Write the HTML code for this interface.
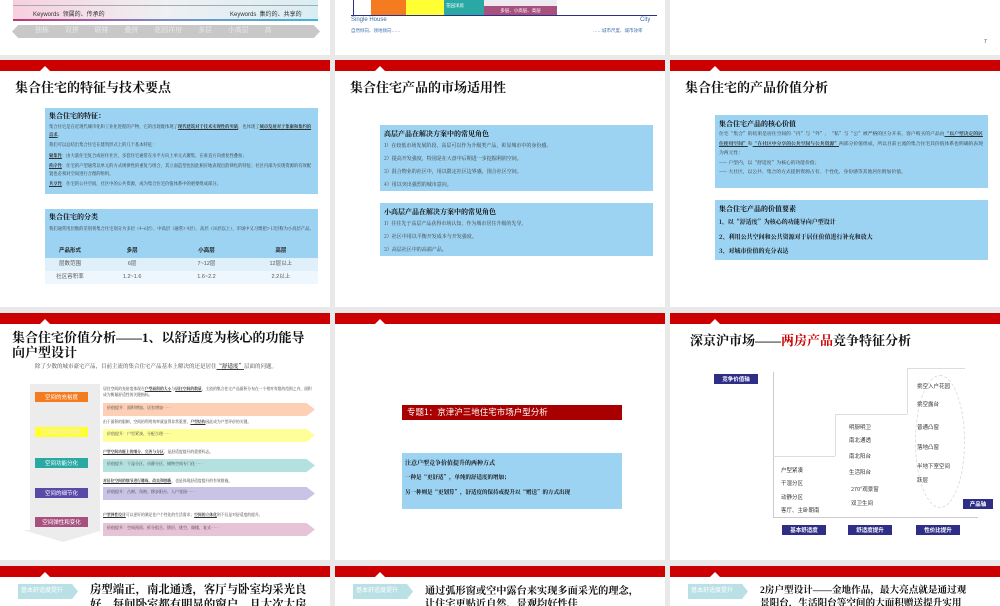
<!DOCTYPE html>
<html><head><meta charset="utf-8"><style>
*{margin:0;padding:0;box-sizing:border-box}
body{width:1000px;height:600px;background:#e9e9e9;position:relative;overflow:hidden;font-family:"Liberation Sans","Noto Sans CJK SC",sans-serif;color:#222}
.s{position:absolute;background:#fff;overflow:hidden}
.bar{position:absolute;left:0;top:0;width:100%;height:11px;background:#cc0000}
.tri{position:absolute;top:6px;left:40px;width:0;height:0;border-left:5px solid transparent;border-right:5px solid transparent;border-bottom:5px solid #fff}
.t{position:absolute;font-family:"Liberation Serif","Noto Serif CJK SC",serif;font-weight:bold;font-size:13px;color:#111;white-space:nowrap}
.a{position:absolute}
.box{position:absolute;background:#9dd3f2}
.bh{font-family:"Noto Serif CJK SC",serif;font-weight:bold;font-size:7px;color:#111;white-space:nowrap}
.sm{font-family:"Noto Serif CJK SC",serif;font-size:4.3px;color:#333;line-height:6.5px}
.lb{position:absolute;color:#fff;font-size:5.5px;text-align:center;line-height:10px;font-family:"Noto Sans CJK SC",sans-serif}
.ar{position:absolute;height:13px;font-size:4px;color:#444;padding:2px 4px;font-family:"Noto Serif CJK SC",serif}
.nb{position:absolute;background:#2e2e86;color:#fff;font-size:5.5px;line-height:10px;text-align:center;font-family:"Noto Sans CJK SC",sans-serif;font-weight:bold}
.ch{position:absolute;font-size:5.5px;color:#333;white-space:nowrap;font-family:"Noto Sans CJK SC",sans-serif}
.bt{position:absolute;font-family:"Liberation Serif","Noto Serif CJK SC",serif;font-weight:bold;font-size:11.4px;color:#111;white-space:nowrap}
.tag{position:absolute;background:#b9e0e4;color:#fff;font-size:6px;line-height:15px;padding-left:3px;width:60px;height:15px;clip-path:polygon(0 0,90% 0,100% 50%,90% 100%,0 100%)}
.p{margin-top:3px}
</style></head><body>

<!-- Row 1 -->
<div class="s" style="left:0;top:0;width:330px;height:55px">
  <div class="a" style="left:13px;top:0;width:305px;height:20px;background:linear-gradient(90deg,#f7d0e0,#eef0f2 50%,#d8eef4)"></div>
  <div class="a" style="left:13px;top:5px;width:305px;height:1px;background:#aaa"></div>
  <div class="a" style="left:13px;top:19px;width:305px;height:2px;background:linear-gradient(90deg,#c0357a,#7a8acb,#40b6d8)"></div>
  <div class="a" style="left:33px;top:9px;font-size:6px;color:#333">Keywords&nbsp;&nbsp;领属的、传承的</div>
  <div class="a" style="left:230px;top:9px;font-size:6px;color:#333">Keywords&nbsp;&nbsp;集约的、共享的</div>
  <div class="a" style="left:12px;top:25px;width:308px;height:13px;background:#c8c8c8;clip-path:polygon(2% 0,98% 0,100% 50%,98% 100%,2% 100%,0 50%)"></div>
  <div class="a" style="left:35px;top:25px;font-size:7px;color:#eee;word-spacing:14px;font-family:'Noto Serif CJK SC',serif">独栋 双拼 联排 叠拼 花园洋房 多层 小高层 高</div>
</div>
<div class="s" style="left:335px;top:0;width:330px;height:55px">
  <div class="a" style="left:18px;top:0;width:1px;height:16px;background:#2e2e86"></div>
  <div class="a" style="left:36px;top:0;width:35px;height:15px;background:#f47b20"></div>
  <div class="a" style="left:71px;top:0;width:38px;height:15px;background:#ffff33"></div>
  <div class="a" style="left:109px;top:0;width:40px;height:15px;background:#2aa9a4"></div>
  <div class="a" style="left:111px;top:3px;font-size:4.5px;color:#fff">花园洋房</div>
  <div class="a" style="left:149px;top:0;width:73px;height:6px;background:#efe9f0"></div>
  <div class="a" style="left:149px;top:6px;width:73px;height:9px;background:#a8517e;color:#fff;font-size:4.5px;text-align:center;line-height:9px">多层、小高层、高层</div>
  <div class="a" style="left:16px;top:15px;width:306px;height:1px;background:#2e2e86"></div>
  <div class="a" style="left:16px;top:17px;font-size:6px;color:#3a6fb0">Single House</div>
  <div class="a" style="left:305px;top:17px;font-size:6px;color:#3a6fb0">City</div>
  <div class="a" style="left:16px;top:28px;font-size:4.5px;color:#3a6fb0">自然倾向、领地倾向……</div>
  <div class="a" style="left:258px;top:28px;font-size:4.5px;color:#3a6fb0">……城市尺度、城市效率</div>
</div>
<div class="s" style="left:670px;top:0;width:330px;height:55px">
  <div class="a" style="left:314px;top:39px;font-size:5px;color:#333">7</div>
</div>

<!-- Row 2 -->
<div class="s" style="left:0;top:60px;width:330px;height:247px">
  <div class="bar"></div><div class="tri"></div>
  <div class="t" style="left:15px;top:17px">集合住宅的特征与技术要点</div>
  <div class="box" style="left:45px;top:48px;width:273px;height:86px;padding:3px 4px">
    <div class="bh">集合住宅的特征：</div>
    <div class="sm" style="margin-top:3px;font-size:4.3px;line-height:7.5px">集合住宅是在近现代城市化和工业化进程的产物，它的出现既体现了<b><u>现代建筑对于技术实现性的突破</u></b>，也体现了<b><u>城市发展对于集聚和集约的需求</u></b>。
    <div class="p">我们可以总结出集合住宅在建筑形式上的几个基本特征：</div>
    <div class="p"><b><u>聚集性</u></b>：由大量住宅复合成居住社区，多套住宅通常在水平方向上单元式聚集，在垂直方向重复性叠加；</div>
    <div class="p"><b><u>秩序性</u></b>：住宅的户型通常以单元的方式规律性的重复与组合，其立面造型也因此相应地表现出韵律化的特征；社区内部为实现资源的有效配置也必须对空间进行合理的组织。</div>
    <div class="p"><b><u>共享性</u></b>：住宅的公共空间，社区中的公共资源，成为集合住宅价值体系中的重要组成部分。</div></div>
  </div>
  <div class="box" style="left:45px;top:149px;width:273px;height:75px;padding:3px 4px">
    <div class="bh">集合住宅的分类</div>
    <div class="sm" style="margin-top:3px;line-height:8px">我们通常用层数的差别将集合住宅划分为多层（4~6层）、中高层（通常7-9层）、高层（10层以上），市场中又习惯把7-12层称为小高层产品。</div>
  </div>
  <div class="a" style="left:45px;top:185px;width:273px;height:39px;font-size:5.5px;text-align:center">
    <div style="display:flex;background:#9dd3f2;height:13px;line-height:13px;font-weight:bold"><div style="width:50px">产品形式</div><div style="flex:1">多层</div><div style="flex:1">小高层</div><div style="flex:1">高层</div></div>
    <div style="display:flex;background:#dff0fb;height:13px;line-height:13px;color:#555"><div style="width:50px">层数范围</div><div style="flex:1">6层</div><div style="flex:1">7~12层</div><div style="flex:1">12层以上</div></div>
    <div style="display:flex;background:#eef7fd;height:13px;line-height:13px;color:#555"><div style="width:50px">社区容积率</div><div style="flex:1">1.2~1.6</div><div style="flex:1">1.6~2.2</div><div style="flex:1">2.2以上</div></div>
  </div>
</div>
<div class="s" style="left:335px;top:60px;width:330px;height:247px">
  <div class="bar"></div><div class="tri"></div>
  <div class="t" style="left:15px;top:17px">集合住宅产品的市场适用性</div>
  <div class="box" style="left:45px;top:65px;width:273px;height:66px;padding:4px 4px">
    <div class="bh">高层产品在解决方案中的常见角色</div>
    <div class="sm" style="font-size:5px;line-height:13px">1）在较低市场发展阶段，高层可以作为升级类产品，彰显城市中的身份感。<br>2）提高开发强度，特别是在大盘中后期进一步挖掘利润空间。<br>3）混合物业的社区中，用以限定社区边界感，围合社区空间。<br>4）用以突出强烈的城市意向。</div>
  </div>
  <div class="box" style="left:45px;top:143px;width:273px;height:53px;padding:4px 4px">
    <div class="bh">小高层产品在解决方案中的常见角色</div>
    <div class="sm" style="font-size:5px;line-height:13px">1）往往先于高层产品获得市场认知，作为城市居住升级的先导。<br>2）社区中用以平衡开发成本与开发强度。<br>3）高层社区中的高端产品。</div>
  </div>
</div>
<div class="s" style="left:670px;top:60px;width:330px;height:247px">
  <div class="bar"></div><div class="tri"></div>
  <div class="t" style="left:15px;top:17px">集合住宅的产品价值分析</div>
  <div class="box" style="left:45px;top:55px;width:273px;height:73px;padding:4px 4px">
    <div class="bh">集合住宅产品的核心价值</div>
    <div class="sm" style="font-size:4.8px;line-height:9.5px">住宅“集合”的结果是居住空间的“内”与“外”、“私”与“公”被严格的区分开来，客户购买的产品由<b><u>“以户型决定的居住使用空间”</u></b>和<b><u>“在社区中分享的公共空间与公共资源”</u></b>两部分价值组成，所以目前主流的集合住宅其价值体系也明确的表现为两元性：<br>—— 户型内，以“舒适度”为核心的功能价值；<br>—— 大社区，以公共、集合的方式提供资源占有、个性化、身份感等其他居住附加价值。</div>
  </div>
  <div class="box" style="left:45px;top:140px;width:273px;height:60px;padding:4px 4px">
    <div class="bh">集合住宅产品的价值要素</div>
    <div class="bh" style="font-size:6px;line-height:14.5px;margin-top:1px">1、以“舒适度”为核心的功能导向户型设计<br>2、利用公共空间和公共资源对于居住价值进行补充和放大<br>3、对城市价值的充分表达</div>
  </div>
</div>

<!-- Row 3 -->
<div class="s" style="left:0;top:313px;width:330px;height:247px">
  <div class="bar"></div><div class="tri"></div>
  <div class="t" style="left:12px;top:17px;font-size:13px;line-height:15px">集合住宅价值分析——1、以舒适度为核心的功能导<br>向户型设计</div>
  <div class="a" style="left:35px;top:49px;font-size:5.5px;color:#444;font-family:'Noto Serif CJK SC',serif">除了少数的城市豪宅产品，目前主流的集合住宅产品基本上解决的还是居住<b><u>“舒适度”</u></b>层面的问题。</div>
  <div class="a" style="left:30px;top:71px;width:70px;height:146px;background:#ececec"></div>
  <div class="a" style="left:23px;top:217px;width:80px;height:12px;background:#ececec;clip-path:polygon(0 0,100% 0,50% 100%)"></div>
  <div class="lb" style="left:35px;top:79px;width:53px;background:#f47b20">空间的充裕度</div>
  <div class="lb" style="left:35px;top:114px;width:53px;background:#ffff33;color:#eee">空间的利用效率</div>
  <div class="lb" style="left:35px;top:145px;width:53px;background:#2aa9a4">空间功能分化</div>
  <div class="lb" style="left:35px;top:175px;width:53px;background:#5a4aa8">空间的细节化</div>
  <div class="lb" style="left:35px;top:204px;width:53px;background:#a8517e">空间弹性和变化</div>
  <div class="a sm" style="left:103px;top:74px;width:212px;font-size:3.8px;line-height:5.5px">居住空间的充裕度体现在<b><u>户型面积的大小</u></b>与<b><u>居住空间的数量</u></b>，主流的集合住宅产品面积分布在一个相对有限的范围之内，面积成为衡量舒适性的关键指标。</div>
  <div class="ar" style="left:103px;top:90px;width:212px;background:#fdd0b6;clip-path:polygon(0 0,96% 0,100% 50%,96% 100%,0 100%)">价值提升：面积增加、居室增加……</div>
  <div class="a sm" style="left:103px;top:107px;width:212px;font-size:3.8px;line-height:5.5px">由于面积的限制，空间的利用效率就显得非常重要，<b><u>户型结构</u></b>因此成为户型评价的关键。</div>
  <div class="ar" style="left:103px;top:116px;width:212px;background:#ffff9a;clip-path:polygon(0 0,96% 0,100% 50%,96% 100%,0 100%)">价值提升：户型紧凑、分配合理……</div>
  <div class="a sm" style="left:103px;top:137px;width:212px;font-size:3.8px;line-height:5.5px"><b><u>户型空间功能上的细分、完善与分区</u></b>，是舒适度提升的重要标志。</div>
  <div class="ar" style="left:103px;top:146px;width:212px;background:#b3e1e0;clip-path:polygon(0 0,96% 0,100% 50%,96% 100%,0 100%)">价值提升：干湿分区、动静分区、储物空间专门化……</div>
  <div class="a sm" style="left:103px;top:166px;width:212px;font-size:3.8px;line-height:5.5px"><b><u>对居住空间的细节进行雕琢，改良和创新</u></b>，也是体现舒适度提升的有效措施。</div>
  <div class="ar" style="left:103px;top:174px;width:212px;background:#c9c3e6;clip-path:polygon(0 0,96% 0,100% 50%,96% 100%,0 100%)">价值提升：凸窗、角窗、移步阳台、入户花园……</div>
  <div class="a sm" style="left:103px;top:200px;width:212px;font-size:3.8px;line-height:5.5px"><b><u>户型弹性设计</u></b>可以更好的满足住户个性化的生活需求；<b><u>空间的立体化</u></b>则不仅是对舒适度的提升。</div>
  <div class="ar" style="left:103px;top:210px;width:212px;background:#e6c3d6;clip-path:polygon(0 0,96% 0,100% 50%,96% 100%,0 100%)">价值提升：空间预留、拆分组合、错层、挑空、阁楼、复式……</div>
</div>
<div class="s" style="left:335px;top:313px;width:330px;height:247px">
  <div class="bar"></div><div class="tri"></div>
  <div class="a" style="left:67px;top:92px;width:220px;height:15px;background:#a80000;color:#fff;font-size:8.5px;line-height:15px;padding-left:5px;font-family:'Noto Sans CJK SC',sans-serif">专题1：京津沪三地住宅市场户型分析</div>
  <div class="box" style="left:67px;top:140px;width:220px;height:56px;padding:5px 3px">
    <div class="bh" style="font-size:6px">注意户型竞争价值提升的两种方式</div>
    <div class="bh" style="font-size:5.5px;margin-top:6px">一种是“更舒适”，单纯的舒适度的增加；</div>
    <div class="bh" style="font-size:5.5px;margin-top:6px;white-space:normal;line-height:11px">另一种则是“更划算”，舒适度的保持或提升以“赠送”的方式出现</div>
  </div>
</div>
<div class="s" style="left:670px;top:313px;width:330px;height:247px">
  <div class="bar"></div><div class="tri"></div>
  <div class="t" style="left:20px;top:17px">深京沪市场——<span style="color:#cc0000">两房产品</span>竞争特征分析</div>
  <div class="nb" style="left:44px;top:61px;width:44px">竞争价值轴</div>
  <div class="a" style="left:103px;top:59px;width:1px;height:145px;background:#ccc"></div>
  <div class="a" style="left:103px;top:204px;width:205px;height:1px;background:#ccc"></div>
  <div class="a" style="left:103px;top:143px;width:62px;height:1px;background:#ddd"></div>
  <div class="a" style="left:165px;top:101px;width:1px;height:42px;background:#ddd"></div>
  <div class="a" style="left:165px;top:101px;width:72px;height:1px;background:#ddd"></div>
  <div class="a" style="left:237px;top:55px;width:1px;height:46px;background:#ddd"></div>
  <div class="a" style="left:237px;top:55px;width:58px;height:1px;background:#ddd"></div>
  <div class="a" style="left:245px;top:62px;width:50px;height:133px;border:1px dashed #ddd;border-radius:50%"></div>
  <div class="nb" style="left:293px;top:186px;width:30px">产品轴</div>
  <div class="ch" style="left:111px;top:153px">户型紧凑</div>
  <div class="ch" style="left:111px;top:166px">干湿分区</div>
  <div class="ch" style="left:111px;top:180px">动静分区</div>
  <div class="ch" style="left:111px;top:193px">客厅、主卧朝南</div>
  <div class="ch" style="left:179px;top:110px">明厨明卫</div>
  <div class="ch" style="left:179px;top:123px">南北通透</div>
  <div class="ch" style="left:179px;top:139px">南北阳台</div>
  <div class="ch" style="left:179px;top:155px">生活阳台</div>
  <div class="ch" style="left:181px;top:172px">270°观景窗</div>
  <div class="ch" style="left:181px;top:186px">双卫生间</div>
  <div class="ch" style="left:247px;top:69px">挑空入户花园</div>
  <div class="ch" style="left:247px;top:87px">挑空露台</div>
  <div class="ch" style="left:247px;top:110px">普通凸窗</div>
  <div class="ch" style="left:247px;top:130px">落地凸窗</div>
  <div class="ch" style="left:247px;top:149px">半地下室空间</div>
  <div class="ch" style="left:247px;top:163px">跃层</div>
  <div class="nb" style="left:112px;top:212px;width:44px">基本舒适度</div>
  <div class="nb" style="left:178px;top:212px;width:44px">舒适度提升</div>
  <div class="nb" style="left:246px;top:212px;width:44px">性价比提升</div>
</div>

<!-- Row 4 -->
<div class="s" style="left:0;top:566px;width:330px;height:40px">
  <div class="bar"></div><div class="tri"></div>
  <div class="tag" style="left:18px;top:18px">基本舒适度提升</div>
  <div class="bt" style="left:90px;top:15px">房型端正，南北通透，客厅与卧室均采光良</div>
  <div class="bt" style="left:90px;top:30px">好，每间卧室都有明显的窗户，且大次大房</div>
</div>
<div class="s" style="left:335px;top:566px;width:330px;height:40px">
  <div class="bar"></div><div class="tri"></div>
  <div class="tag" style="left:18px;top:18px">基本舒适度提升</div>
  <div class="bt" style="left:90px;top:16px;font-size:10.2px">通过弧形窗或空中露台来实现多面采光的理念，</div>
  <div class="bt" style="left:90px;top:29px;font-size:10.2px">让住宅更贴近自然，景观均好性佳</div>
</div>
<div class="s" style="left:670px;top:566px;width:330px;height:40px">
  <div class="bar"></div><div class="tri"></div>
  <div class="tag" style="left:18px;top:18px">基本舒适度提升</div>
  <div class="bt" style="left:90px;top:16px;font-size:9.6px">2房户型设计——金地作品，最大亮点就是通过观</div>
  <div class="bt" style="left:90px;top:29px;font-size:9.6px">景阳台，生活阳台等空间的大面积赠送提升实用</div>
</div>
</body></html>
